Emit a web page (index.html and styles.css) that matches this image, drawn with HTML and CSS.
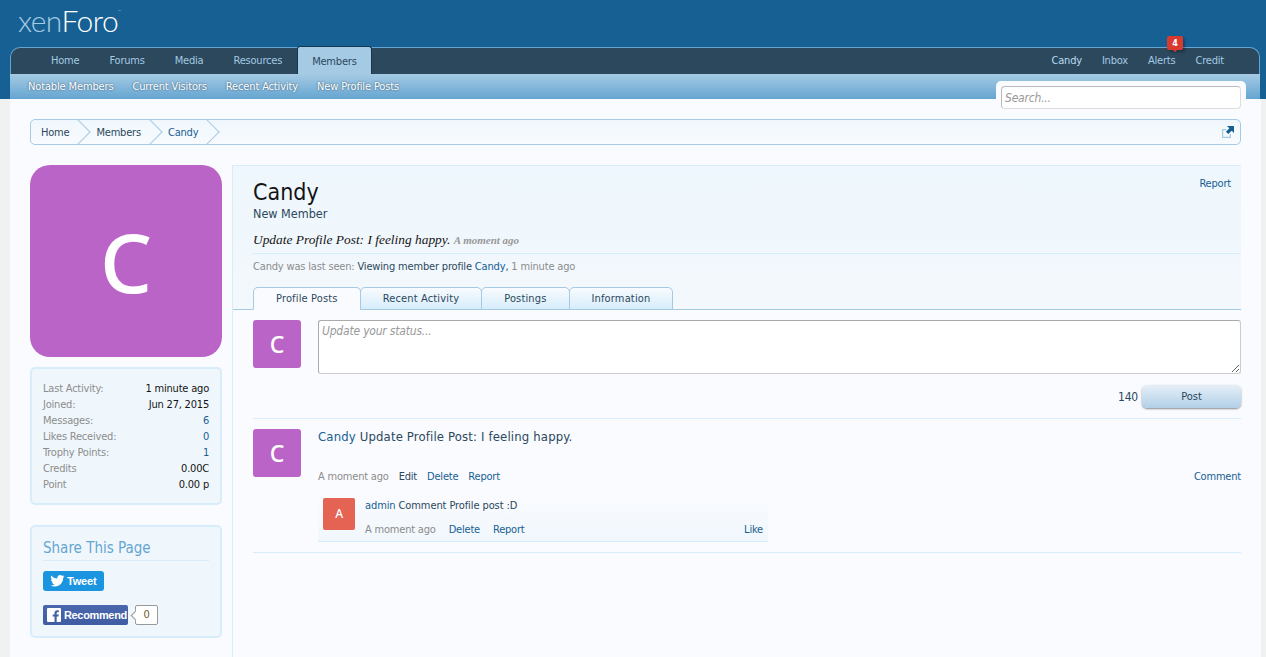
FILE: index.html
```html
<!DOCTYPE html>
<html lang="en">
<head>
  <meta charset="UTF-8">
  <title>Candy | XenForo</title>
  <link rel="stylesheet" href="styles.css">
</head>
<body>

<div class="top">
  <div class="logo"><span class="logo-xen">xen</span>Foro<span class="logo-tm">™</span></div>
  <div class="tabs">
    <a class="tab">Home</a>
    <a class="tab">Forums</a>
    <a class="tab">Media</a>
    <a class="tab">Resources</a>
    <a class="tab tab-on">Members</a>
    <div class="tabs-right">
      <a class="tab tab-b">Candy</a>
      <a class="tab">Inbox</a>
      <a class="tab tab-alert">Alerts<span class="badge">4</span></a>
      <a class="tab">Credit</a>
    </div>
  </div>
  <div class="subnav">
    <a>Notable Members</a>
    <a>Current Visitors</a>
    <a>Recent Activity</a>
    <a>New Profile Posts</a>
    <div class="search"><input type="text" placeholder="Search..."></div>
  </div>
</div>

<div class="page">
  <div class="crumbs">
    <a class="crumb crumb-first">Home</a>
    <a class="crumb">Members</a>
    <a class="crumb crumb-b">Candy</a>
    <svg class="jump" width="14" height="14" viewBox="0 0 14 14">
      <path d="M1 4h4v1.200H2.200v6.600h6.600V9H10v4H1z" fill="#a5cae4"/>
      <path d="M6 1h7v7l-2.300-2.300-3.400 3.400-2.400-2.400 3.400-3.400z" fill="#176093"/>
    </svg>
  </div>

  <div class="cols">
    <div class="side">
      <div class="avatar-big">C</div>
      <div class="box stats">
        <div class="stat"><span>Last Activity:</span><b>1 minute ago</b></div>
        <div class="stat"><span>Joined:</span><b>Jun 27, 2015</b></div>
        <div class="stat"><span>Messages:</span><b class="link">6</b></div>
        <div class="stat"><span>Likes Received:</span><b class="link">0</b></div>
        <div class="stat"><span>Trophy Points:</span><b class="link">1</b></div>
        <div class="stat"><span>Credits</span><b>0.00C</b></div>
        <div class="stat"><span>Point</span><b>0.00 p</b></div>
      </div>
      <div class="box share">
        <h3>Share This Page</h3>
        <a class="tweet">
          <svg width="15" height="12" viewBox="0 0 24 20"><path fill="#fff" d="M24 2.400c-.9.400-1.800.7-2.800.8 1-.6 1.800-1.600 2.200-2.700-1 .6-2 1-3.100 1.200C19.300.7 18 0 16.600 0c-2.700 0-4.900 2.200-4.900 4.900 0 .4 0 .8.100 1.100C7.700 5.800 4.100 3.900 1.700.9c-.4.700-.7 1.600-.7 2.500 0 1.700.9 3.200 2.200 4.100-.8 0-1.600-.2-2.200-.6v.1c0 2.400 1.700 4.400 3.900 4.800-.4.100-.8.200-1.300.2-.3 0-.6 0-.9-.1.600 2 2.400 3.400 4.600 3.400-1.700 1.300-3.800 2.100-6.100 2.100-.4 0-.8 0-1.200-.1C2.200 18.300 4.800 19.100 7.500 19.100c9.100 0 14-7.500 14-14v-.6c1-.7 1.800-1.500 2.500-2.100z"/></svg>
          Tweet
        </a>
        <div class="fb-row">
          <a class="fb">
            <svg width="14" height="14" viewBox="0 0 14 14"><rect width="14" height="14" rx="1" fill="#fff"/><path fill="#4460a8" d="M9.700 14V8.600h1.800l.3-2.100H9.700V5.200c0-.6.200-1 1-1h1.100V2.300c-.2 0-.9-.1-1.600-.1-1.600 0-2.700 1-2.700 2.800v1.500H5.700v2.100h1.800V14z"/></svg>
            Recommend
          </a>
          <span class="fb-count">0</span>
        </div>
      </div>
    </div>

    <div class="main">
      <div class="head">
        <a class="report-top">Report</a>
        <h1>Candy</h1>
        <div class="title">New Member</div>
        <div class="status">Update Profile Post: I feeling happy. <span>A moment ago</span></div>
        <div class="seen">Candy was last seen: <em>Viewing member profile <a>Candy</a>,</em> 1 minute ago</div>
        <div class="ptabs">
          <a class="ptab ptab-on">Profile Posts</a>
          <a class="ptab">Recent Activity</a>
          <a class="ptab">Postings</a>
          <a class="ptab">Information</a>
        </div>
      </div>

      <div class="body">
        <div class="composer">
          <div class="avatar">C</div>
          <div class="composer-r">
            <textarea placeholder="Update your status..."></textarea>
            <div class="composer-foot">
              <span class="count">140</span>
              <button class="post-btn">Post</button>
            </div>
          </div>
        </div>

        <div class="msg">
          <div class="avatar">C</div>
          <div class="msg-r">
            <div class="msg-text"><a class="name">Candy</a> Update Profile Post: I feeling happy.</div>
            <div class="meta">
              <span class="when">A moment ago</span>
              <a class="dark">Edit</a>
              <a>Delete</a>
              <a>Report</a>
              <a class="end">Comment</a>
            </div>
            <div class="comment">
              <div class="avatar-sm">A</div>
              <div class="comment-r">
                <div class="comment-text"><a>admin</a> Comment Profile post :D</div>
                <div class="meta meta-c">
                  <span class="when">A moment ago</span>
                  <a>Delete</a>
                  <a>Report</a>
                  <a class="end">Like</a>
                </div>
              </div>
            </div>
          </div>
        </div>
      </div>
    </div>
  </div>
</div>

</body>
</html>
```

FILE: styles.css
```css
*{
  box-sizing: border-box;
}
html, body{
  height: 100%;
}
body{
  margin: 0;
  background: #f0f2f1;
  font-family: "DejaVu Sans Condensed", "DejaVu Sans", sans-serif;
  font-size: 11px;
  letter-spacing: -0.2px;
  color: #2b485c;
  overflow: hidden;
}
a{
  color: #176093;
  text-decoration: none;
}

/* header */
.top{
  background: #176093;
  padding: 0 6px 0 10px;
  height: 99px;
}
.logo{
  height: 47px;
  padding: 0 0 0 8px;
  font-family: "Lato", sans-serif;
  font-weight: 300;
  font-size: 30px;
  line-height: 24px;
  letter-spacing: -0.6px;
  color: #fff;
}
.logo-xen{
  color: #a5cae4;
}
.logo-tm{
  font-size: 4px;
  vertical-align: 19px;
  color: #a5cae4;
}
.tabs{
  display: flex;
  height: 27px;
  padding-left: 25px;
  background: #2b485c;
  border: 1px solid #65a5d1;
  border-bottom: 0;
  border-radius: 10px 10px 0 0;
}
.tab{
  position: relative;
  padding: 0 15px;
  line-height: 26px;
  color: #a5cae4;
}
.tab-on{
  margin-top: -2px;
  height: 28px;
  padding: 1px 14px 0;
  line-height: 27px;
  background: #a5cae4;
  color: #2b485c;
  border: 1px solid #14364f;
  border-bottom: 0;
  border-radius: 3px 3px 0 0;
}
.tabs-right{
  display: flex;
  margin-left: auto;
  padding-right: 25px;
}
.tabs-right .tab{
  padding: 0 10px;
}
.tabs-right .tab-b{
  color: #bcdcf2;
}
.badge{
  position: absolute;
  top: -12px;
  left: 29px;
  width: 16px;
  height: 14px;
  background: #d93a30;
  color: #fff;
  font-size: 9px;
  font-weight: 700;
  line-height: 14px;
  text-align: center;
  border-radius: 2px;
  box-shadow: 2px 2px 3px rgba(0,0,0,.3);
}
.badge::after{
  content: "";
  position: absolute;
  left: 6px;
  bottom: -2px;
  border: 2px solid transparent;
  border-top-color: #d93a30;
  border-bottom: 0;
}
.subnav{
  position: relative;
  display: flex;
  gap: 19px;
  height: 25px;
  padding-left: 18px;
  line-height: 26px;
  letter-spacing: -0.14px;
  background: linear-gradient(#a5cae4, #65a5d1);
}
.subnav a{
  color: #fff;
  text-shadow: 0 0 2px #2b485c;
}
.search{
  position: absolute;
  top: 7px;
  right: 14px;
  width: 250px;
  height: 32px;
  padding: 5px;
  background: #fafbff;
  border-radius: 5px 5px 0 0;
}
.search input{
  display: block;
  width: 240px;
  height: 23px;
  padding: 1px 3px 0;
  border: 1px solid #ddd;
  border-top-color: #bbb;
  border-left-color: #bbb;
  border-radius: 4px;
  background: #fff;
  font: italic 12px "DejaVu Sans Condensed", sans-serif;
  letter-spacing: -0.2px;
}
input::placeholder, textarea::placeholder{
  color: #999;
}

/* page */
.page{
  display: flex;
  flex-direction: column;
  margin: 0 5px 0 10px;
  height: calc(100% - 99px);
  padding: 20px 20px 0 20px;
  background: #fafbff;
}
.crumbs{
  display: flex;
  align-items: center;
  flex: none;
  height: 26px;
  background: linear-gradient(#f0f7fc, #f8fbfe);
  border: 1px solid #a5cae4;
  border-radius: 5px;
  overflow: hidden;
}
.crumb{
  position: relative;
  height: 24px;
  padding: 0 21px 0 6px;
  line-height: 26px;
  color: #2b485c;
}
.crumb-first{
  padding-left: 10px;
}
.crumb-b{
  color: #176093;
}
.crumb::after{
  content: "";
  position: absolute;
  top: 3px;
  right: 3px;
  width: 17px;
  height: 17px;
  border-top: 1px solid #a5cae4;
  border-right: 1px solid #a5cae4;
  transform: rotate(45deg);
}
.jump{
  margin-left: auto;
  margin-right: 5px;
}
.cols{
  display: flex;
  flex: 1;
  margin-top: 20px;
}
.side{
  width: 192px;
  flex: none;
}
.avatar-big{
  height: 192px;
  border-radius: 20px;
  background: #ba64c8;
  color: #fff;
  font-family: "Noto Sans", sans-serif;
  font-size: 82px;
  font-weight: 500;
  line-height: 192px;
  text-align: center;
}
.box{
  margin-top: 10px;
  padding: 11px;
  background: #f0f7fc;
  border: 2px solid #d7edfc;
  border-radius: 5px;
}
.stats{
  height: 138px;
  padding-top: 12px;
}
.stat{
  display: flex;
  justify-content: space-between;
  height: 16px;
  line-height: 16px;
  color: #8c8c8c;
}
.stat b{
  font-weight: 400;
  color: #141414;
}
.stat b.link{
  color: #176093;
}
.share{
  height: 113px;
  margin-top: 20px;
  padding-top: 11px;
}
.share h3{
  margin: 0;
  height: 23px;
  font-size: 15px;
  font-weight: 400;
  line-height: 21px;
  letter-spacing: 0;
  color: #65a5d1;
  border-bottom: 1px solid #d7edfc;
}
.tweet{
  display: flex;
  align-items: center;
  gap: 2px;
  width: 61px;
  height: 20px;
  margin-top: 10px;
  padding-left: 7px;
  background: #1b95e0;
  border-radius: 3px;
  color: #fff;
  font-family: "Liberation Sans", sans-serif;
  font-weight: 700;
}
.fb-row{
  display: flex;
  align-items: center;
  margin-top: 14px;
}
.fb{
  display: flex;
  align-items: center;
  gap: 3px;
  width: 85px;
  height: 20px;
  padding-left: 4px;
  background: linear-gradient(#4a66ad, #3f5ca3);
  border-radius: 2px;
  color: #fff;
  font-weight: 700;
  font-family: "Liberation Sans", sans-serif;
  letter-spacing: -0.35px;
}
.fb-count{
  position: relative;
  width: 23px;
  height: 20px;
  margin-left: 7px;
  background: #fff;
  border: 1px solid #999;
  border-radius: 2px;
  color: #6b5a2a;
  line-height: 18px;
  text-align: center;
}
.fb-count::before{
  content: "";
  position: absolute;
  left: -4px;
  top: 6px;
  width: 6px;
  height: 6px;
  background: #fff;
  border-left: 1px solid #999;
  border-bottom: 1px solid #999;
  transform: rotate(45deg);
}

/* profile */
.main{
  flex: 1;
  margin-left: 10px;
  border-left: 1px solid #d7edfc;
}
.head{
  position: relative;
  height: 145px;
  padding: 12px 0 0 20px;
  background: linear-gradient(#eef7fd, #f3f8fc);
  border-top: 1px solid #d7edfc;
  border-bottom: 1px solid #a5cae4;
}
.report-top{
  position: absolute;
  top: 11px;
  right: 10px;
}
.head h1{
  margin: 0;
  font-size: 23px;
  font-weight: 400;
  line-height: 28px;
  letter-spacing: 0;
  color: #141414;
}
.title{
  font-size: 12.500px;
  line-height: 15px;
  letter-spacing: 0;
  color: #2b485c;
}
.status{
  margin-top: 10px;
  padding-bottom: 4px;
  border-bottom: 1px solid #d7edfc;
  font-family: "Liberation Serif", serif;
  font-style: italic;
  font-size: 13.400px;
  line-height: 17px;
  letter-spacing: 0;
  color: #141414;
}
.status span{
  font-size: 11px;
  font-weight: 700;
  color: #999;
}
.seen{
  margin-top: 4px;
  line-height: 17px;
  letter-spacing: -0.17px;
  color: #8c8c8c;
}
.seen em{
  font-style: normal;
  color: #2b485c;
}
.ptabs{
  display: flex;
  position: absolute;
  left: 20px;
  bottom: -1px;
}
.ptab{
  height: 23px;
  padding: 0 22px;
  margin-right: -1px;
  line-height: 22px;
  letter-spacing: 0.15px;
  color: #2b485c;
  background: linear-gradient(#f8fbfe, #d7edfc);
  border: 1px solid #a5cae4;
  border-radius: 5px 5px 0 0;
}
.ptab-on{
  background: #fafbff;
  border-bottom-color: #fafbff;
}
.body{
  padding: 10px 0 0 20px;
}
.composer, .msg{
  display: flex;
  gap: 17px;
}
.avatar{
  flex: none;
  width: 48px;
  height: 48px;
  border-radius: 3px;
  background: #ba64c8;
  color: #fff;
  font-family: "Noto Sans", sans-serif;
  font-size: 23px;
  font-weight: 500;
  line-height: 48px;
  text-align: center;
}
.composer{
  padding-bottom: 10px;
  border-bottom: 1px solid #d7edfc;
}
.composer-r, .msg-r{
  flex: 1;
}
.composer textarea{
  display: block;
  width: 100%;
  height: 54px;
  padding: 3px;
  border: 1px solid #ccc;
  border-top-color: #aaa;
  border-left-color: #aaa;
  border-radius: 3px;
  background: #fff;
  font: italic 12px "DejaVu Sans Condensed", sans-serif;
  letter-spacing: -0.2px;
}
.composer-foot{
  display: flex;
  justify-content: flex-end;
  align-items: center;
  gap: 4px;
  margin-top: 11px;
}
.count{
  font-size: 12px;
}
.post-btn{
  width: 99px;
  height: 23px;
  padding: 0;
  background: linear-gradient(#e6eff7, #b2d0e8);
  border: 0;
  border-radius: 5px;
  box-shadow: 0 1px 2px rgba(0,0,0,.45);
  font: 11px "DejaVu Sans Condensed", sans-serif;
  color: #2b485c;
}
.msg{
  padding: 10px 0;
  border-bottom: 1px solid #d7edfc;
}
.msg-text{
  font-size: 13px;
  line-height: 16px;
  letter-spacing: 0.15px;
}
.meta{
  display: flex;
  gap: 10px;
  margin-top: 24px;
  line-height: 16px;
}
.when{
  color: #8c8c8c;
}
.dark{
  color: #2b485c;
}
.end{
  margin-left: auto;
}
.comment{
  display: flex;
  gap: 10px;
  width: 450px;
  height: 49px;
  margin-top: 8px;
  padding: 5px;
  background: linear-gradient(#fafbff, #f0f7fc);
  border-bottom: 1px solid #d7edfc;
}
.avatar-sm{
  flex: none;
  width: 32px;
  height: 32px;
  border-radius: 2px;
  background: #e56353;
  color: #fff;
  font-family: "Noto Sans", sans-serif;
  font-size: 12px;
  font-weight: 500;
  line-height: 32px;
  text-align: center;
}
.comment-r{
  flex: 1;
}
.comment-text{
  line-height: 16px;
  letter-spacing: -0.1px;
}
.meta-c{
  gap: 13px;
  margin-top: 8px;
}
```
